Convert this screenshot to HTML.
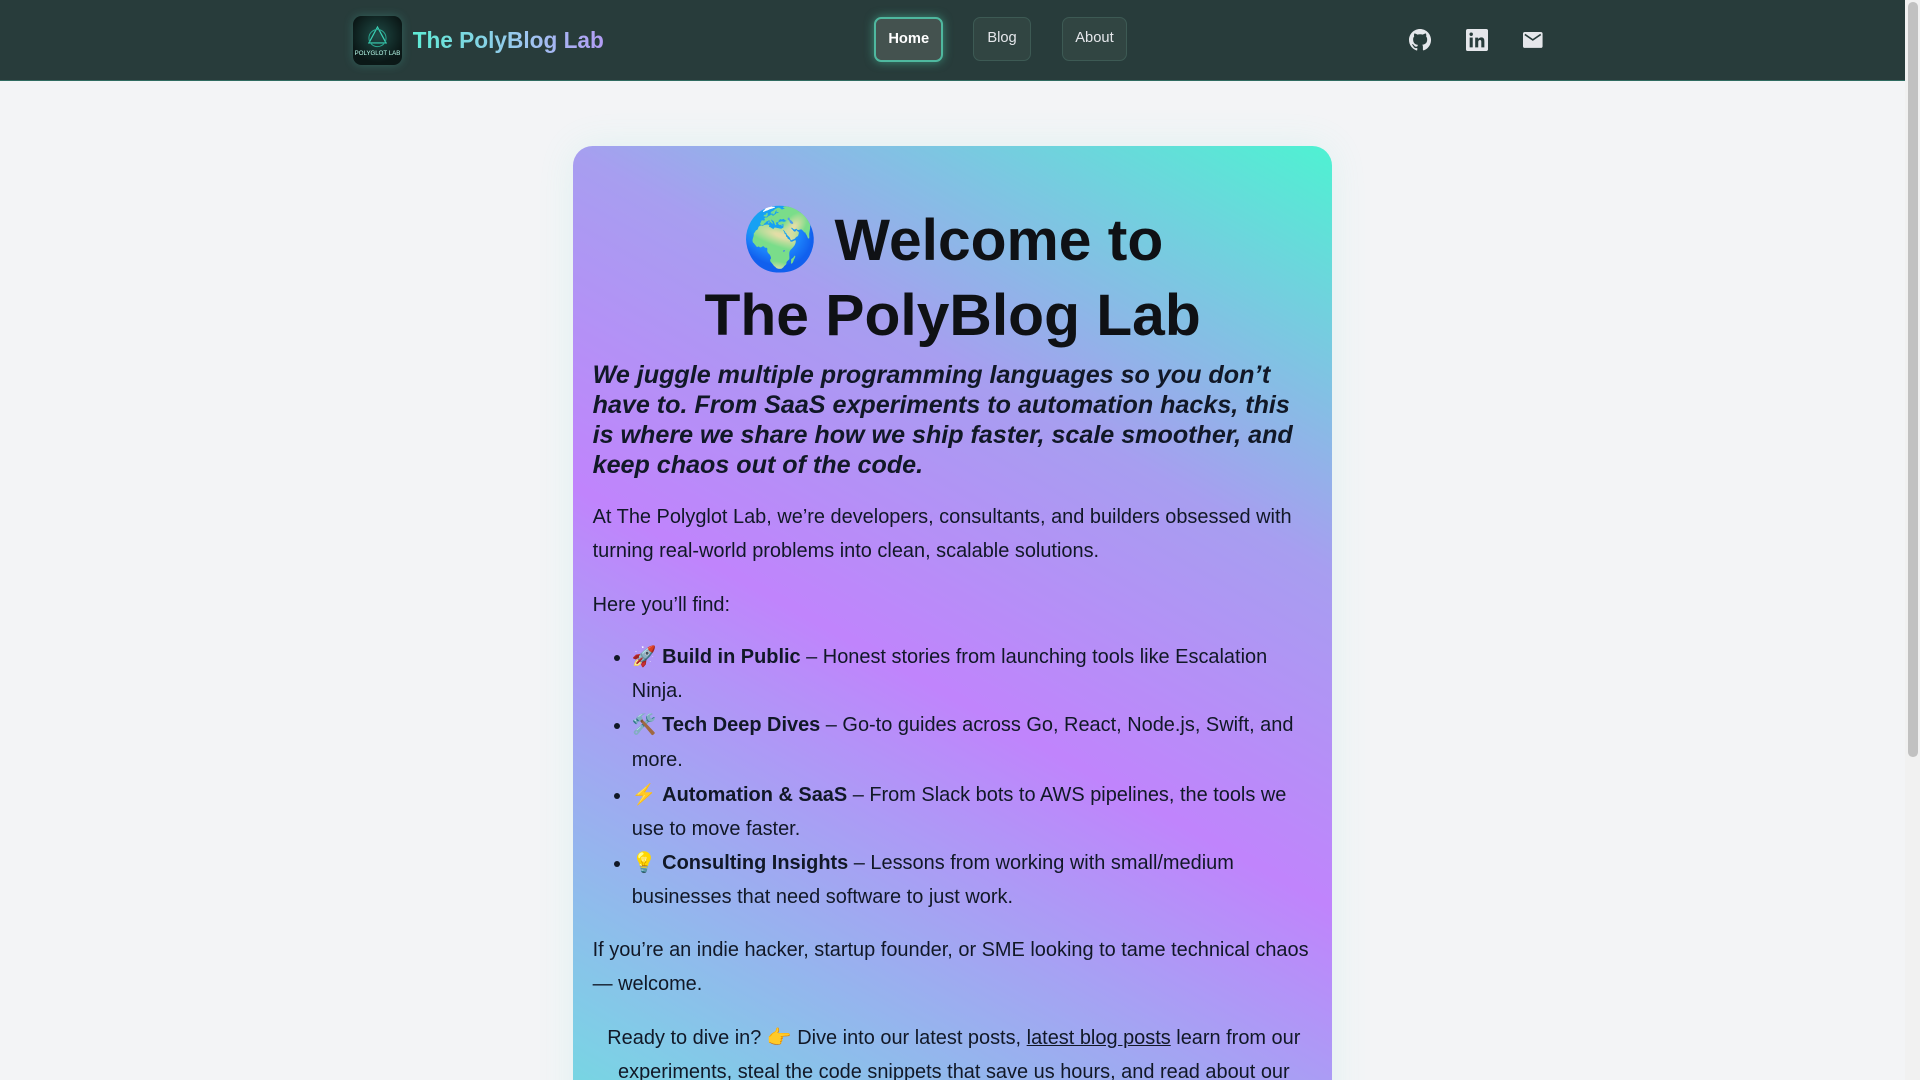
<!DOCTYPE html>
<html><head><meta charset="utf-8">
<style>
html{zoom:1.22449;overflow:hidden}
body{margin:0;overflow:hidden;background:#f3f4f6;font-family:"Liberation Sans","DejaVu Sans",sans-serif;color:#111827}
.pg{position:relative;width:1568px;height:882px;overflow:hidden}
.hdr{position:absolute;left:0;top:0;width:1556px;height:65px;background:#283c3b;border-bottom:1px solid #2f6b60}
.logo{position:absolute;left:288px;top:13px;width:40px;height:40px;border-radius:7px;background:radial-gradient(circle at 50% 40%,#1f4a45,#0b1817 70%);box-shadow:0 0 8px rgba(80,220,190,.25)}
.brand{position:absolute;left:337px;top:22px;font-weight:bold;font-size:18.5px;background:linear-gradient(90deg,#5eead4,#9ec5f0 60%,#b39cf5);-webkit-background-clip:text;color:transparent}
.btn{position:absolute;top:14px;height:34px;border:1px solid #3d5a54;border-radius:6px;background:#314542;color:#e5e7eb;font-size:12px;line-height:34px;text-align:center}
.btn.on{border:2px solid #4fb89f;background:#44524f;color:#fff;font-weight:bold;box-shadow:0 0 8px rgba(80,220,180,.5);height:33px;top:14px}
.ic{position:absolute;top:24px}
.sb{position:absolute;right:0;top:0;width:12px;height:882px;background:#f1f1f1}
.sb div{position:absolute;left:2px;top:2px;width:8px;height:616px;background:#c1c1c1;border-radius:4px}
.card{position:absolute;left:468px;top:119px;width:620px;height:900px;border-radius:16px;background:linear-gradient(29deg,#5eead4 0%,#7ecfe6 14%,#c084fc 50%,#a79ef0 72%,#4ef2d2 100%);box-shadow:0 0 30px rgba(94,234,212,.12)}
h1{margin:0;position:absolute;left:0;top:46px;width:620px;text-align:center;font-size:48px;line-height:61px;font-weight:bold;color:#0f1115}
.lead{position:absolute;left:16px;top:175px;width:590px;font-size:20.5px;line-height:24.5px;font-style:italic;font-weight:bold;margin:0}
.c{position:absolute;left:16px;width:590px;font-size:16.3px;line-height:28px;margin:0}
ul{position:absolute;left:16px;top:404px;width:560px;margin:0;padding-left:32px;font-size:16.3px;line-height:27.8px}
a{color:#111827}
</style></head><body><div class="pg">
<div class="hdr">
<div class="logo"><svg width="40" height="40" viewBox="0 0 40 40"><path d="M20 9 L27 22 L13 22 Z" fill="none" stroke="#3bd1b5" stroke-width="1"/><circle cx="20" cy="18" r="7" fill="none" stroke="#2aa690" stroke-width=".8"/><text x="20" y="32" font-size="5" fill="#bfe" text-anchor="middle" font-family="Liberation Sans">POLYGLOT LAB</text></svg></div>
<div class="brand">The PolyBlog Lab</div>
<div class="btn on" style="left:714px;width:53px">Home</div>
<div class="btn" style="left:795px;width:45px">Blog</div>
<div class="btn" style="left:867px;width:52px">About</div>
<svg class="ic" style="left:1151px" width="18" height="18" viewBox="0 0 16 16"><path fill="#e5e7eb" d="M8 0C3.6 0 0 3.6 0 8c0 3.5 2.3 6.5 5.5 7.6.4.1.5-.2.5-.4v-1.4c-2.2.5-2.7-1-2.7-1-.4-.9-.9-1.2-.9-1.2-.7-.5.1-.5.1-.5.8.1 1.2.8 1.2.8.7 1.3 1.9.9 2.4.7.1-.5.3-.9.5-1.1-1.8-.2-3.6-.9-3.6-4 0-.9.3-1.6.8-2.1-.1-.2-.4-1 .1-2.1 0 0 .7-.2 2.2.8.6-.2 1.3-.3 2-.3s1.4.1 2 .3c1.5-1 2.2-.8 2.2-.8.4 1.1.2 1.9.1 2.1.5.6.8 1.3.8 2.1 0 3.1-1.9 3.7-3.6 3.9.3.3.5.8.5 1.5v2.2c0 .2.1.5.6.4C13.7 14.5 16 11.5 16 8c0-4.4-3.6-8-8-8z"/></svg>
<svg class="ic" style="left:1197px" width="18" height="18" viewBox="0 0 18 18"><rect width="18" height="18" rx="1.5" fill="#e5e7eb"/><rect x="3" y="7" width="2.5" height="8" fill="#283c3b"/><circle cx="4.25" cy="4.3" r="1.4" fill="#283c3b"/><path d="M7.5 7h2.4v1.2c.5-.9 1.5-1.4 2.6-1.4 2 0 2.5 1.3 2.5 3.1V15h-2.5v-4.4c0-.9-.2-1.6-1.1-1.6s-1.4.7-1.4 1.6V15H7.5z" fill="#283c3b"/></svg>
<svg class="ic" style="left:1244px;top:26px" width="16" height="13" viewBox="0 0 16 13"><rect width="16" height="13" rx="1.5" fill="#e5e7eb"/><path d="M1.5 2l6.5 4.5L14.5 2" fill="none" stroke="#283c3b" stroke-width="1.3"/></svg>
</div>
<div class="card">
<h1><span style="font-size:50px">🌍</span> Welcome to<br>The PolyBlog Lab</h1>
<p class="lead">We juggle multiple programming languages so you don’t have to. From SaaS experiments to automation hacks, this is where we share how we ship faster, scale smoother, and keep chaos out of the code.</p>
<p class="c" style="top:289px">At The Polyglot Lab, we’re developers, consultants, and builders obsessed with turning real-world problems into clean, scalable solutions.</p>
<p class="c" style="top:361px">Here you’ll find:</p>
<ul>
<li>🚀 <b>Build in Public</b> – Honest stories from launching tools like Escalation Ninja.</li>
<li>🛠️ <b>Tech Deep Dives</b> – Go-to guides across Go, React, Node.js, Swift, and more.</li>
<li><span style="font-family:'Noto Color Emoji',sans-serif">⚡️</span> <b>Automation &amp; SaaS</b> – From Slack bots to AWS pipelines, the tools we use to move faster.</li>
<li>💡 <b>Consulting Insights</b> – Lessons from working with small/medium businesses that need software to just work.</li>
</ul>
<p class="c" style="top:643px">If you’re an indie hacker, startup founder, or SME looking to tame technical chaos — welcome.</p>
<p class="c" style="top:715px;text-align:center">Ready to dive in? 👉 Dive into our latest posts, <a href="#">latest blog posts</a> learn from our experiments, steal the code snippets that save us hours, and read about our</p>
</div>
<div class="sb"><div></div></div>
</div></body></html>
